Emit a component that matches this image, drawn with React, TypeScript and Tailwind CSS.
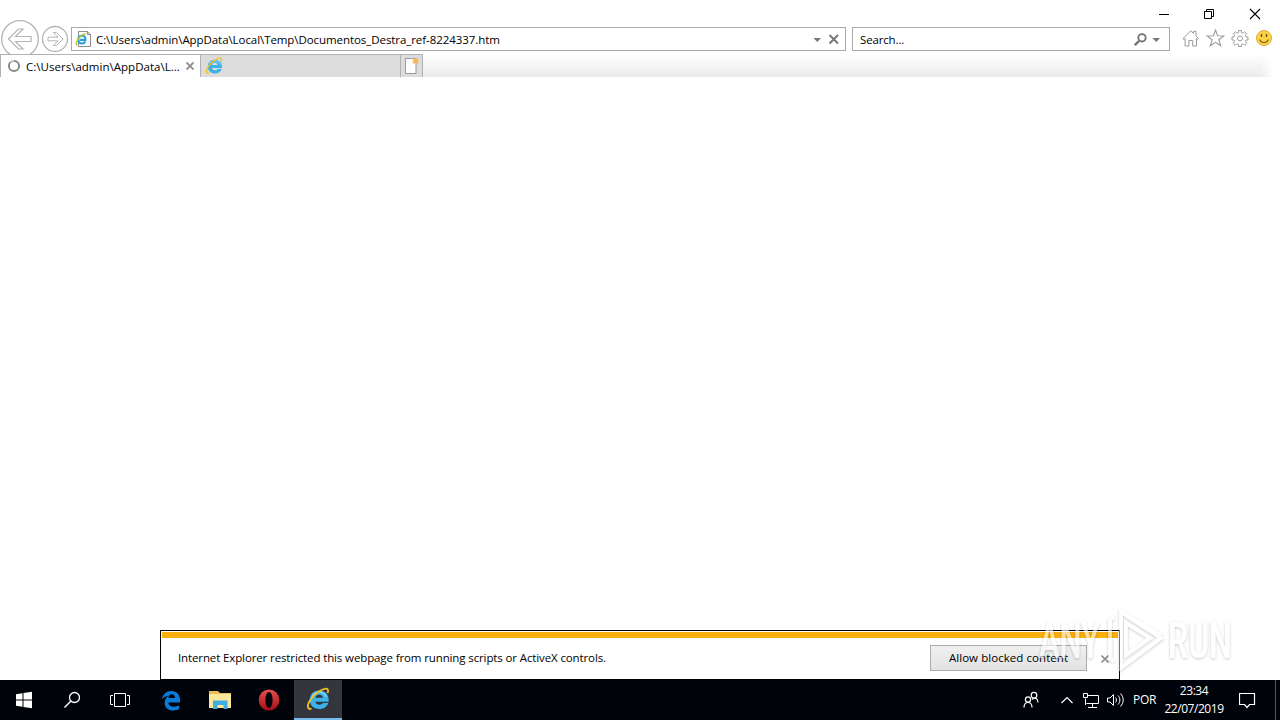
import React from 'react';

function IeLogo({ className }: { className?: string }) {
  return (
    <svg className={className} viewBox="0 0 24 24">
      <path
        fillRule="evenodd"
        d="M13 3.500c6 0 9.700 4 9.700 9.600v1.600H9.400c.3 2 1.800 3 4 3 1.800 0 2.900-.6 3.600-1.700h5.300c-1.400 3.900-4.600 6-9 6-5.700 0-9.500-3.500-9.500-9.200C3.800 7.200 7.600 3.500 13 3.500zM9.400 10.800h7.500c-.3-2-1.600-3.100-3.700-3.100-2.100 0-3.400 1.100-3.800 3.100z"
        fill="#3bb3ea"
      />
      <path d="M6 11c.8-3.600 3.500-5.800 7.200-5.800 3.300 0 5.900 1.700 7 4.600" fill="none" stroke="#93def8" strokeWidth="1.300" />
      <path
        d="M5.500 21.600C1.200 22.800.6 18.800 4.300 13.100 8.200 7.200 15 2 19.600 1.600c2.700-.2 3 1.900 1.900 4.600"
        fill="none"
        stroke="#f4c21f"
        strokeWidth="1.800"
      />
    </svg>
  );
}

function WindowControls() {
  return (
    <div className="flex h-[27px] justify-end">
      <svg className="h-[27px] w-[140px]" viewBox="1140 0 140 27" fill="none" stroke="#000">
        <path d="M1159 14.500h10" />
        <path d="M1204.500 11.500h7v7h-7zM1206.500 11.500v-2h7v7h-2" />
        <path d="M1250 9l10 10M1260 9l-10 10" strokeWidth="1.100" />
      </svg>
    </div>
  );
}

function NavButtons() {
  return (
    <svg className="-mt-[8px] h-[38px] w-[71px] shrink-0" viewBox="0 19 71 38" fill="none" stroke="#b4b4b4">
      <circle cx="20" cy="39" r="18.300" strokeWidth="1.300" />
      <path d="M8.500 39l10-10h4.500l-7.500 7.500H31v5H15.500L23 49h-4.500z" strokeWidth="1.200" />
      <circle cx="55" cy="39" r="12.500" strokeWidth="1.300" />
      <path d="M63 39l-6.500-6.500h-3.200l4.700 4.700h-10v3.600h10l-4.700 4.700h3.200z" />
    </svg>
  );
}

function AddressBar() {
  return (
    <div className="flex h-6 w-[775px] items-center border border-[#a9a9a9] bg-white">
      <svg className="ml-[3px] h-[18px] w-[18px] shrink-0" viewBox="75 30 18 18" fill="none">
        <path d="M78.500 31.500h9l3 3v12h-12z" fill="#fff" stroke="#8c8c8c" />
        <path d="M87.500 31.500v3h3" stroke="#8c8c8c" />
        <path
          d="M85.300 41.500c-.7 1.300-1.900 2-3.300 2-2.200 0-3.700-1.600-3.700-3.900s1.600-3.900 3.800-3.900 3.700 1.600 3.400 4.200h-5.600"
          stroke="#289edb"
          strokeWidth="2.100"
        />
        <path d="M77.500 45c-2.300-.2-1.300-3.600 1.500-7 2.200-2.700 5.700-4.700 7.200-3.900" stroke="#bdc927" strokeWidth="1.400" />
      </svg>
      <span className="mt-0.5 ml-[3px] flex-1 text-[11.5px] tracking-[-0.07px] whitespace-nowrap">
        C:\Users\admin\AppData\Local\Temp\Documentos_Destra_ref-8224337.htm
      </span>
      <svg className="h-[22px] w-9 shrink-0" viewBox="809 28 36 22">
        <path d="M813.500 38h7.500l-3.750 4z" fill="#777" />
        <path d="M829.500 35l8.500 8.500M838 35l-8.500 8.500" stroke="#777" strokeWidth="2" />
      </svg>
    </div>
  );
}

function SearchBox() {
  return (
    <div className="ml-[6px] flex h-6 w-[318px] items-center border border-[#a9a9a9] bg-white">
      <span className="mt-0.5 ml-[7px] flex-1 text-[11.5px] tracking-[-0.15px]">Search...</span>
      <svg className="h-[22px] w-9 shrink-0" viewBox="1133 28 36 22" fill="none" stroke="#707070">
        <circle cx="1142" cy="37.800" r="3.700" strokeWidth="1.800" />
        <path d="M1139 41l-4.200 4.200" strokeWidth="2.400" />
        <path d="M1152.500 38h7.500l-3.750 4z" fill="#777" stroke="none" />
      </svg>
    </div>
  );
}

function ToolIcons() {
  return (
    <svg className="h-6 w-[110px] shrink-0" viewBox="1170 27 110 24" fill="none" stroke="#9b9b9b">
      <path
        d="M1183 38.500l7.800-7.700 2.700 2.600v-2h2.500v4.500l2.600 2.600-1.100 1-1-1v7.500h-3.800v-5.500h-3.800v5.500h-3.800v-7.500l-1 1z"
        strokeWidth="1"
      />
      <path
        d="M1215.500 30l2.100 5.800 6.200.2-4.900 3.800 1.800 6-5.200-3.500-5.200 3.500 1.800-6-4.900-3.800 6.200-.2z"
        strokeWidth="1.100"
      />
      <path
        d="M1238.500 32.500v-2h3v2l1.700.7 1.500-1.500 2.100 2.100-1.500 1.500.7 1.700h2v3h-2l-.7 1.700 1.500 1.500-2.100 2.100-1.500-1.500-1.700.7v2h-3v-2l-1.700-.7-1.500 1.500-2.100-2.100 1.500-1.500-.7-1.700h-2v-3h2l.7-1.700-1.500-1.500 2.100-2.100 1.500 1.500z"
        strokeWidth="1"
      />
      <circle cx="1240" cy="38.500" r="2.500" />
      <circle cx="1264" cy="38" r="7.500" fill="#fcd443" stroke="#dfa93a" />
      <path d="M1261.500 34v3M1266.500 34v3" stroke="#71511b" strokeWidth="1.500" />
      <path d="M1259.500 39.500c1.500 4 7.500 4 9 0" stroke="#8c651e" strokeWidth="1.100" />
    </svg>
  );
}

function TabStrip() {
  return (
    <div className="relative z-10 flex h-[23px] bg-gradient-to-b from-white to-[#ebebeb]">
      <div className="flex w-[200px] items-center border-t border-l border-[#b2b2b2] bg-white">
        <svg className="ml-[6px] h-[14px] w-[14px]" viewBox="0 0 14 14" fill="none">
          <circle cx="7" cy="7" r="5.100" stroke="#8a8a8a" strokeWidth="2" />
          <path d="M3.400 3.400A5.100 5.100 0 0 1 7 1.900" stroke="#d0d0d0" strokeWidth="2" />
        </svg>
        <span className="mt-0.5 ml-[5px] flex-1 text-[11.5px] tracking-[0.02px] whitespace-nowrap">
          C:\Users\admin\AppData\L...
        </span>
        <svg className="mr-[6px] h-2 w-2" viewBox="0 0 8 8">
          <path d="M.5.5l7 7M7.500.5l-7 7" stroke="#8c8c8c" strokeWidth="1.800" />
        </svg>
      </div>
      <div className="flex w-[200px] items-center border-t border-l border-[#b2b2b2] bg-[#dcdcdc]">
        <IeLogo className="ml-1 h-[18px] w-[18px]" />
      </div>
      <div className="w-[23px] border-x border-t border-[#b2b2b2] bg-[#dcdcdc]">
        <svg className="h-[22px] w-[21px]" viewBox="401 55 21 22">
          <path d="M405.500 58.500h10.500v15h-10.500z" fill="#fff" stroke="#999" />
          <path d="M415.500 57.500v7M412 61h7M413 58.500l5 5M418 58.500l-5 5" stroke="#f5b749" strokeWidth="1.100" />
        </svg>
      </div>
      <div className="ml-auto w-5 bg-gradient-to-r from-transparent to-white to-70%" />
    </div>
  );
}

function NotificationBar() {
  return (
    <div className="h-[50px] w-[960px] border border-black bg-white px-px pt-px">
      <div className="h-[6px] bg-[#f9af0b]" />
      <div className="flex h-[40px] items-center">
        <span className="ml-4 flex-1 text-[11.5px] tracking-[-0.12px] whitespace-nowrap">
          Internet Explorer restricted this webpage from running scripts or ActiveX controls.
        </span>
        <button className="h-[26px] w-[157px] border border-[#acacac] bg-gradient-to-b from-[#f0f0f0] to-[#e2e2e2] text-[11.5px] tracking-[0.06px] whitespace-nowrap">
          Allow blocked content
        </button>
        <svg className="mt-[2px] mr-[9px] ml-[14px] h-2 w-2" viewBox="0 0 8 8">
          <path d="M.5.5l7 7M7.500.5l-7 7" stroke="#909090" strokeWidth="1.700" />
        </svg>
      </div>
    </div>
  );
}

function Watermark() {
  return (
    <svg
      className="pointer-events-none absolute top-[600px] left-[1030px] h-[80px] w-[240px]"
      viewBox="1030 600 240 80"
      fill="none"
    >
      <defs>
        <filter id="glow" x="-10%" y="-20%" width="120%" height="140%">
          <feDropShadow dx="0" dy="1" stdDeviation="1.7" floodColor="#000" floodOpacity="0.38" />
        </filter>
      </defs>
      <g filter="url(#glow)" opacity="0.6">
        <g fill="#fff" fontFamily="Roboto, sans-serif" fontSize="50" fontWeight="500">
          <text transform="translate(1039 658) scale(0.62 1)">ANY</text>
          <text transform="translate(1168 658) scale(0.64 1)">RUN</text>
        </g>
        <path
          d="M1121 612v56l40-30zM1121 612l40 23M1126 623v32l24-17zM1114 617l-4 3v38l4 3"
          stroke="#fff"
          strokeWidth="3.500"
        />
      </g>
    </svg>
  );
}

function Taskbar() {
  return (
    <div className="flex h-10 items-center bg-[#01030a] text-white">
      <svg className="h-10 w-[147px]" viewBox="0 680 147 40" fill="none" stroke="#fff">
        <path
          d="M16 694.200l6.500-1v6.300H16zM23.500 693l8.500-1.200v7.700h-8.500zM16 700.500h6.500v6.300l-6.500-1zM23.500 700.500H32v7.700l-8.500-1.200z"
          fill="#fff"
          stroke="none"
        />
        <circle cx="74.500" cy="697.500" r="5" strokeWidth="1.300" />
        <path d="M71 701l-6.500 6.500" strokeWidth="1.400" />
        <path d="M114.500 693.500h11v13h-11zM113 695.500h-2.500v9h2.500M127 695.500h2.500v9H127" />
      </svg>
      <div className="flex w-12 justify-center">
        <svg className="h-[21px] w-[20px]" viewBox="0 0 22 22" preserveAspectRatio="none">
          <path
            d="M1 10C2.200 4.500 6 1 11.500 1 17.500 1 21 5.200 21 10.500V13H8c.3 3 2.800 4.500 6 4.500 2.500 0 4.500-.7 6-1.500v4c-1.800 1-4 1.500-6.700 1.500C7.500 21.500 4 18 4 13.500c0-3.400 1.700-5.900 4.500-7.500C5 6.300 2.500 8 1 10zm7-1.500h7.500C15.400 6 14 4.500 11.800 4.500 9.700 4.500 8.500 6 8 8.500z"
            fill="#087bd8"
          />
        </svg>
      </div>
      <div className="flex w-[49px] justify-center">
        <svg className="h-[20px] w-[22px]" viewBox="0 0 22 20">
          <path d="M0 1h9l2 2h11v15H0z" fill="#e8bd55" />
          <path d="M0 4h22v14H0z" fill="#fde79a" />
          <path d="M4 10.500h14.500V19h-4v-4h-6v4H4z" fill="#3fafe3" />
        </svg>
      </div>
      <div className="flex w-[50px] justify-center">
        <svg className="h-[22px] w-[22px]" viewBox="0 0 22 22">
          <defs>
            <linearGradient id="opera" x1="0" y1="0" x2="0" y2="1">
              <stop offset="0" stopColor="#e5504c" />
              <stop offset="1" stopColor="#a70d17" />
            </linearGradient>
          </defs>
          <ellipse cx="11" cy="11" rx="10.300" ry="10.500" fill="url(#opera)" />
          <ellipse cx="11" cy="11" rx="3.600" ry="8" fill="#04040a" />
        </svg>
      </div>
      <div className="flex h-10 w-12 items-center justify-center border-b-2 border-[#76b9ed] bg-[#35363d]">
        <IeLogo className="h-6 w-6" />
      </div>
      <svg className="ml-auto h-10 w-[112px]" viewBox="1017 680 112 40" fill="none" stroke="#fff" strokeWidth="1.200">
        <circle cx="1034" cy="695.200" r="2.800" />
        <circle cx="1028" cy="699.500" r="2.600" />
        <path d="M1024 707.500c0-3 1.500-5 4-5s4 2 4 5M1032 699.500c3-3 6-.5 6 3" />
        <path d="M1061.500 703l5.500-5.500 5.500 5.500" />
        <path d="M1087.500 695.500h11v8h-12M1085.500 698.500v6.500M1083.500 693.500h4v4h-4zM1092.500 703.500v4M1088 707.500h9" strokeWidth="1" />
        <path d="M1107.500 698h2.500l3.500-3.500v11L1110 702h-2.500zM1115.500 697.500c1.300 1.500 1.300 3.500 0 5M1118 695.500c2.500 2.700 2.500 6.300 0 9M1120.500 693.500c3.600 3.900 3.600 9.100 0 13" strokeWidth="1" />
      </svg>
      <span className="ml-1 w-6 text-[12px] tracking-[-0.3px]">POR</span>
      <div className="ml-[7px] flex w-[60px] flex-col items-center text-[12px] leading-[18px] tracking-[-0.45px]">
        <span>23:34</span>
        <span>22/07/2019</span>
      </div>
      <svg className="ml-[15px] h-10 w-[41px]" viewBox="1239 680 41 40" fill="none">
        <path d="M1239.500 693.500h15v11h-5l-2.500 3-2.500-3h-5z" stroke="#fff" strokeWidth="1.200" />
        <path d="M1275.500 680v40" stroke="#55575c" />
      </svg>
    </div>
  );
}

export default function App() {
  return (
    <div className="relative flex h-[720px] w-[1280px] flex-col overflow-hidden bg-white font-['Open_Sans','Noto_Sans',sans-serif] text-black">
      <WindowControls />
      <div className="flex h-[27px] items-start">
        <NavButtons />
        <AddressBar />
        <SearchBox />
        <ToolIcons />
      </div>
      <TabStrip />
      <main className="flex flex-1 items-end justify-center bg-white">
        <NotificationBar />
      </main>
      <Taskbar />
      <Watermark />
    </div>
  );
}
